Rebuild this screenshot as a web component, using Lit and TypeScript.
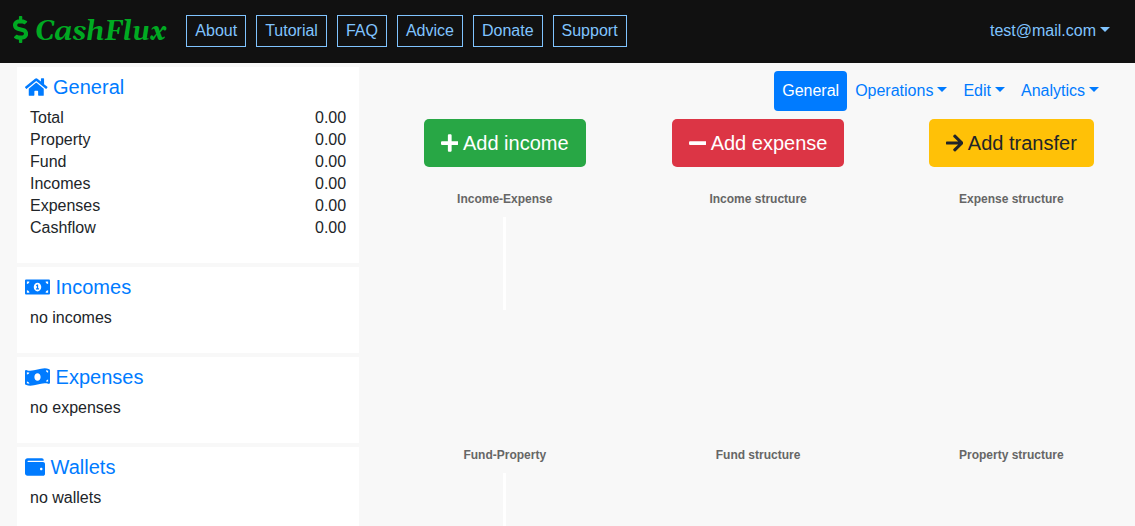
import { LitElement, html, css, svg } from "lit";
import { customElement, property } from "lit/decorators.js";

type Icon = { width: number; path: string };

const icons: Record<string, Icon> = {
  dollar: {
    width: 288,
    path: "M209.2 233.4l-108-31.6C88.7 198.2 80 186.5 80 173.5c0-16.3 13.2-29.5 29.5-29.5h66.3c12.2 0 24.2 3.7 34.2 10.5 6.1 4.1 14.3 3.1 19.5-2l34.8-34c7.1-6.9 6.1-18.4-1.8-24.5C238 74.8 207.4 64.1 176 64V16c0-8.8-7.2-16-16-16h-32c-8.8 0-16 7.2-16 16v48h-2.5C45.8 64-5.4 118.7.5 183.6c4.2 46.1 39.4 83.6 83.8 96.6l102.5 30c12.5 3.7 21.2 15.3 21.2 28.3 0 16.3-13.2 29.5-29.5 29.5h-66.3C100 368 88 364.3 78 357.5c-6.1-4.1-14.3-3.1-19.5 2l-34.8 34c-7.1 6.9-6.1 18.4 1.8 24.5 24.5 19.2 55.1 29.9 86.5 30v48c0 8.8 7.2 16 16 16h32c8.8 0 16-7.2 16-16v-48.2c46.6-.9 90.3-28.6 105.7-72.7 21.5-61.6-14.6-124.8-72.5-141.7z",
  },
  home: {
    width: 576,
    path: "M280.37 148.26L96 300.11V464a16 16 0 0 0 16 16l112.06-.29a16 16 0 0 0 15.92-16V368a16 16 0 0 1 16-16h64a16 16 0 0 1 16 16v95.64a16 16 0 0 0 16 16.05L464 480a16 16 0 0 0 16-16V300L295.67 148.26a12.19 12.19 0 0 0-15.3 0zM571.6 251.47L488 182.56V44.05a12 12 0 0 0-12-12h-56a12 12 0 0 0-12 12v72.61L318.47 43a48 48 0 0 0-61 0L4.34 251.47a12 12 0 0 0-1.6 16.9l25.5 31A12 12 0 0 0 45.15 301l235.22-193.74a12.19 12.19 0 0 1 15.3 0L530.9 301a12 12 0 0 0 16.9-1.6l25.5-31a12 12 0 0 0-1.7-16.93z",
  },
  bill: {
    width: 640,
    path: "M352 288h-16v-88c0-4.42-3.58-8-8-8h-13.58c-4.74 0-9.37 1.4-13.31 4.03l-15.33 10.22a7.994 7.994 0 0 0-2.22 11.09l8.88 13.31a7.994 7.994 0 0 0 11.09 2.22l.47-.31V288h-16c-4.42 0-8 3.58-8 8v16c0 4.42 3.58 8 8 8h64c4.42 0 8-3.58 8-8v-16c0-4.42-3.58-8-8-8zM608 64H32C14.33 64 0 78.33 0 96v320c0 17.67 14.33 32 32 32h576c17.67 0 32-14.33 32-32V96c0-17.67-14.33-32-32-32zM48 400v-64c35.35 0 64 28.65 64 64H48zm0-224v-64h64c0 35.35-28.65 64-64 64zm272 192c-53.02 0-96-50.15-96-112 0-61.86 42.98-112 96-112s96 50.13 96 112c0 61.87-43 112-96 112zm272 32h-64c0-35.35 28.65-64 64-64v64zm0-224c-35.35 0-64-28.65-64-64h64v64z",
  },
  billWave: {
    width: 640,
    path: "M621.16 54.46C582.37 38.19 543.55 32 504.75 32c-123.17-.01-246.33 62.34-369.5 62.34-30.89 0-61.76-3.92-92.65-13.72-3.47-1.1-6.95-1.62-10.35-1.62C15.04 79 0 92.32 0 110.81v317.26c0 12.63 7.23 24.6 18.84 29.46C57.63 473.81 96.45 480 135.25 480c123.17 0 246.34-62.35 369.51-62.35 30.89 0 61.76 3.92 92.65 13.72 3.47 1.1 6.95 1.62 10.35 1.62 17.21 0 32.25-13.32 32.25-31.81V83.93c-.01-12.64-7.24-24.6-18.85-29.47zM48 132.22c20.12 5.04 41.12 7.57 62.72 8.93C104.84 170.54 79 192.69 48 192.69v-60.47zm0 285v-47.78c34.37 0 62.18 27.27 63.71 61.4-22.53-1.81-43.59-6.31-63.71-13.62zM320 352c-44.19 0-80-42.99-80-96 0-53.02 35.82-96 80-96s80 42.98 80 96c0 53.03-35.83 96-80 96zm272 27.78c-17.52-4.39-35.71-6.85-54.32-8.44 5.87-26.08 27.5-45.88 54.32-49.28v57.72zm0-236.11c-30.89-3.91-54.86-29.7-55.81-61.55 19.54 2.17 38.09 6.23 55.81 12.66v48.89z",
  },
  wallet: {
    width: 512,
    path: "M461.2 128H80c-8.84 0-16-7.16-16-16s7.16-16 16-16h384c8.84 0 16-7.16 16-16 0-26.51-21.49-48-48-48H64C28.65 32 0 60.65 0 96v320c0 35.35 28.65 64 64 64h397.2c28.02 0 50.8-21.53 50.8-48V176c0-26.47-22.78-48-50.8-48zM416 336c-17.67 0-32-14.33-32-32s14.33-32 32-32 32 14.33 32 32-14.33 32-32 32z",
  },
  plus: {
    width: 448,
    path: "M416 208H272V64c0-17.67-14.33-32-32-32h-32c-17.67 0-32 14.33-32 32v144H32c-17.67 0-32 14.33-32 32v32c0 17.67 14.33 32 32 32h144v144c0 17.67 14.33 32 32 32h32c17.67 0 32-14.33 32-32V304h144c17.67 0 32-14.33 32-32v-32c0-17.67-14.33-32-32-32z",
  },
  minus: {
    width: 448,
    path: "M416 208H32c-17.67 0-32 14.33-32 32v32c0 17.67 14.33 32 32 32h384c17.67 0 32-14.33 32-32v-32c0-17.67-14.33-32-32-32z",
  },
  arrow: {
    width: 448,
    path: "M190.5 66.9l22.2-22.2c9.4-9.4 24.6-9.4 33.9 0L441 239c9.4 9.4 9.4 24.6 0 33.9L246.6 467.3c-9.4 9.4-24.6 9.4-33.9 0l-22.2-22.2c-9.5-9.5-9.3-25 .4-34.3L311.4 296H24c-13.3 0-24-10.7-24-24v-32c0-13.3 10.7-24 24-24h287.4L190.9 101.2c-9.8-9.3-10-24.8-.4-34.3z",
  },
};

@customElement("cf-icon")
class CfIcon extends LitElement {
  @property() name = "";

  static styles = css`
    :host { display: inline-block; height: 1em; line-height: 1; vertical-align: -0.125em; }
    svg { display: block; height: 1em; fill: currentColor; }
  `;

  render() {
    const icon = icons[this.name];
    return html`<svg viewBox="0 0 ${icon.width} 512" aria-hidden="true">${svg`<path d=${icon.path}></path>`}</svg>`;
  }
}

@customElement("cf-panel")
class CfPanel extends LitElement {
  @property() icon = "";
  @property() heading = "";

  static styles = css`
    :host { display: block; background: #fff; padding: 8px 8px 24px; }
    .title { margin: 0 0 8px; font-size: 20px; line-height: 24px; font-weight: 400; }
    .title a { color: #007bff; text-decoration: none; }
    .body { padding: 0 5px; line-height: 22px; }
  `;

  render() {
    return html`
      <h2 class="title"><a href="#"><cf-icon name=${this.icon}></cf-icon> ${this.heading}</a></h2>
      <div class="body"><slot></slot></div>
    `;
  }
}

@customElement("app-root")
class AppRoot extends LitElement {
  links = ["About", "Tutorial", "FAQ", "Advice", "Donate", "Support"];
  menus = ["Operations", "Edit", "Analytics"];
  totals = ["Total", "Property", "Fund", "Incomes", "Expenses", "Cashflow"];
  actions = [
    { label: "Add income", icon: "plus", kind: "income" },
    { label: "Add expense", icon: "minus", kind: "expense" },
    { label: "Add transfer", icon: "arrow", kind: "transfer" },
  ];
  charts = [
    { title: "Income-Expense", gauge: true },
    { title: "Income structure", gauge: false },
    { title: "Expense structure", gauge: false },
    { title: "Fund-Property", gauge: true },
    { title: "Fund structure", gauge: false },
    { title: "Property structure", gauge: false },
  ];

  static styles = css`
    :host {
      display: block;
      height: 100vh;
      overflow: hidden;
      background: #f8f8f8;
      color: #212529;
      font: 16px/24px "Liberation Sans", Arial, sans-serif;
    }
    .top {
      display: flex;
      align-items: center;
      min-height: 63px;
      box-sizing: border-box;
      padding: 0 25px 2px 13px;
      background: #111;
    }
    .brand {
      margin-right: 20px;
      padding-top: 2px;
      color: #0a2;
      font: italic bold 27px/40px Gelasio, Georgia, "Liberation Serif", serif;
      text-decoration: none;
      white-space: nowrap;
    }
    .links { display: flex; gap: 10px; margin-right: auto; }
    .link {
      padding: 3px 8px;
      border: 1px solid #80c4ff;
      color: #80c4ff;
      text-decoration: none;
    }
    button {
      border: 0;
      background: none;
      font: inherit;
      cursor: pointer;
      white-space: nowrap;
    }
    .user { padding: 0; color: #80c4ff; }
    .caret {
      display: inline-block;
      margin-left: 4px;
      vertical-align: 4px;
      border: 5px solid transparent;
      border-top-color: currentColor;
      border-bottom: 0;
    }
    .page {
      display: grid;
      grid-template-columns: minmax(0, 15fr) minmax(0, 32fr);
      column-gap: 34px;
      padding: 4px 12px 0 17px;
    }
    .panels { display: grid; gap: 4px; align-content: start; }
    .totals { width: 100%; border-collapse: collapse; }
    .totals th, .totals td { padding: 0; font-weight: 400; text-align: left; }
    .totals td { text-align: right; }
    .note { margin: 0; }
    .tabs { display: flex; justify-content: flex-end; margin: 4px 16px 8px 0; }
    .tab { padding: 8px; border-radius: 4px; color: #007bff; }
    .tab.active { background: #007bff; color: #fff; }
    .actions, .charts { display: grid; grid-template-columns: repeat(3, minmax(0, 1fr)); column-gap: 30px; }
    .actions { justify-items: center; margin-bottom: 20px; }
    .action {
      padding: 9px 17px;
      border-radius: 5px;
      color: #fff;
      font-size: 20px;
      line-height: 30px;
    }
    .income { background: #28a745; }
    .expense { background: #dc3545; }
    .transfer { background: #ffc107; color: #212529; }
    .chart { min-height: 256px; }
    .chart-title {
      margin: 0 0 6px;
      color: #666;
      font-size: 12px;
      line-height: 24px;
      font-weight: 700;
      text-align: center;
    }
    .gauge { width: 3px; height: 93px; margin: 0 auto; background: #fff; }
  `;

  render() {
    return html`
      <header class="top">
        <a class="brand" href="#"><cf-icon name="dollar"></cf-icon> CashFlux</a>
        <nav class="links">
          ${this.links.map((text) => html`<a class="link" href="#">${text}</a>`)}
        </nav>
        <button class="user" aria-haspopup="true">test@mail.com<span class="caret"></span></button>
      </header>
      <main class="page">
        <aside class="panels">
          <cf-panel icon="home" heading="General">
            <table class="totals">
              ${this.totals.map((name) => html`<tr><th scope="row">${name}</th><td>0.00</td></tr>`)}
            </table>
          </cf-panel>
          <cf-panel icon="bill" heading="Incomes"><p class="note">no incomes</p></cf-panel>
          <cf-panel icon="billWave" heading="Expenses"><p class="note">no expenses</p></cf-panel>
          <cf-panel icon="wallet" heading="Wallets"><p class="note">no wallets</p></cf-panel>
        </aside>
        <section>
          <nav class="tabs">
            <button class="tab active">General</button>
            ${this.menus.map((text) => html`<button class="tab" aria-haspopup="true">${text}<span class="caret"></span></button>`)}
          </nav>
          <div class="actions">
            ${this.actions.map((a) => html`<button class="action ${a.kind}"><cf-icon name=${a.icon}></cf-icon> ${a.label}</button>`)}
          </div>
          <div class="charts">
            ${this.charts.map((c) => html`
              <div class="chart">
                <h3 class="chart-title">${c.title}</h3>
                ${c.gauge ? html`<div class="gauge"></div>` : ""}
              </div>
            `)}
          </div>
        </section>
      </main>
    `;
  }
}
